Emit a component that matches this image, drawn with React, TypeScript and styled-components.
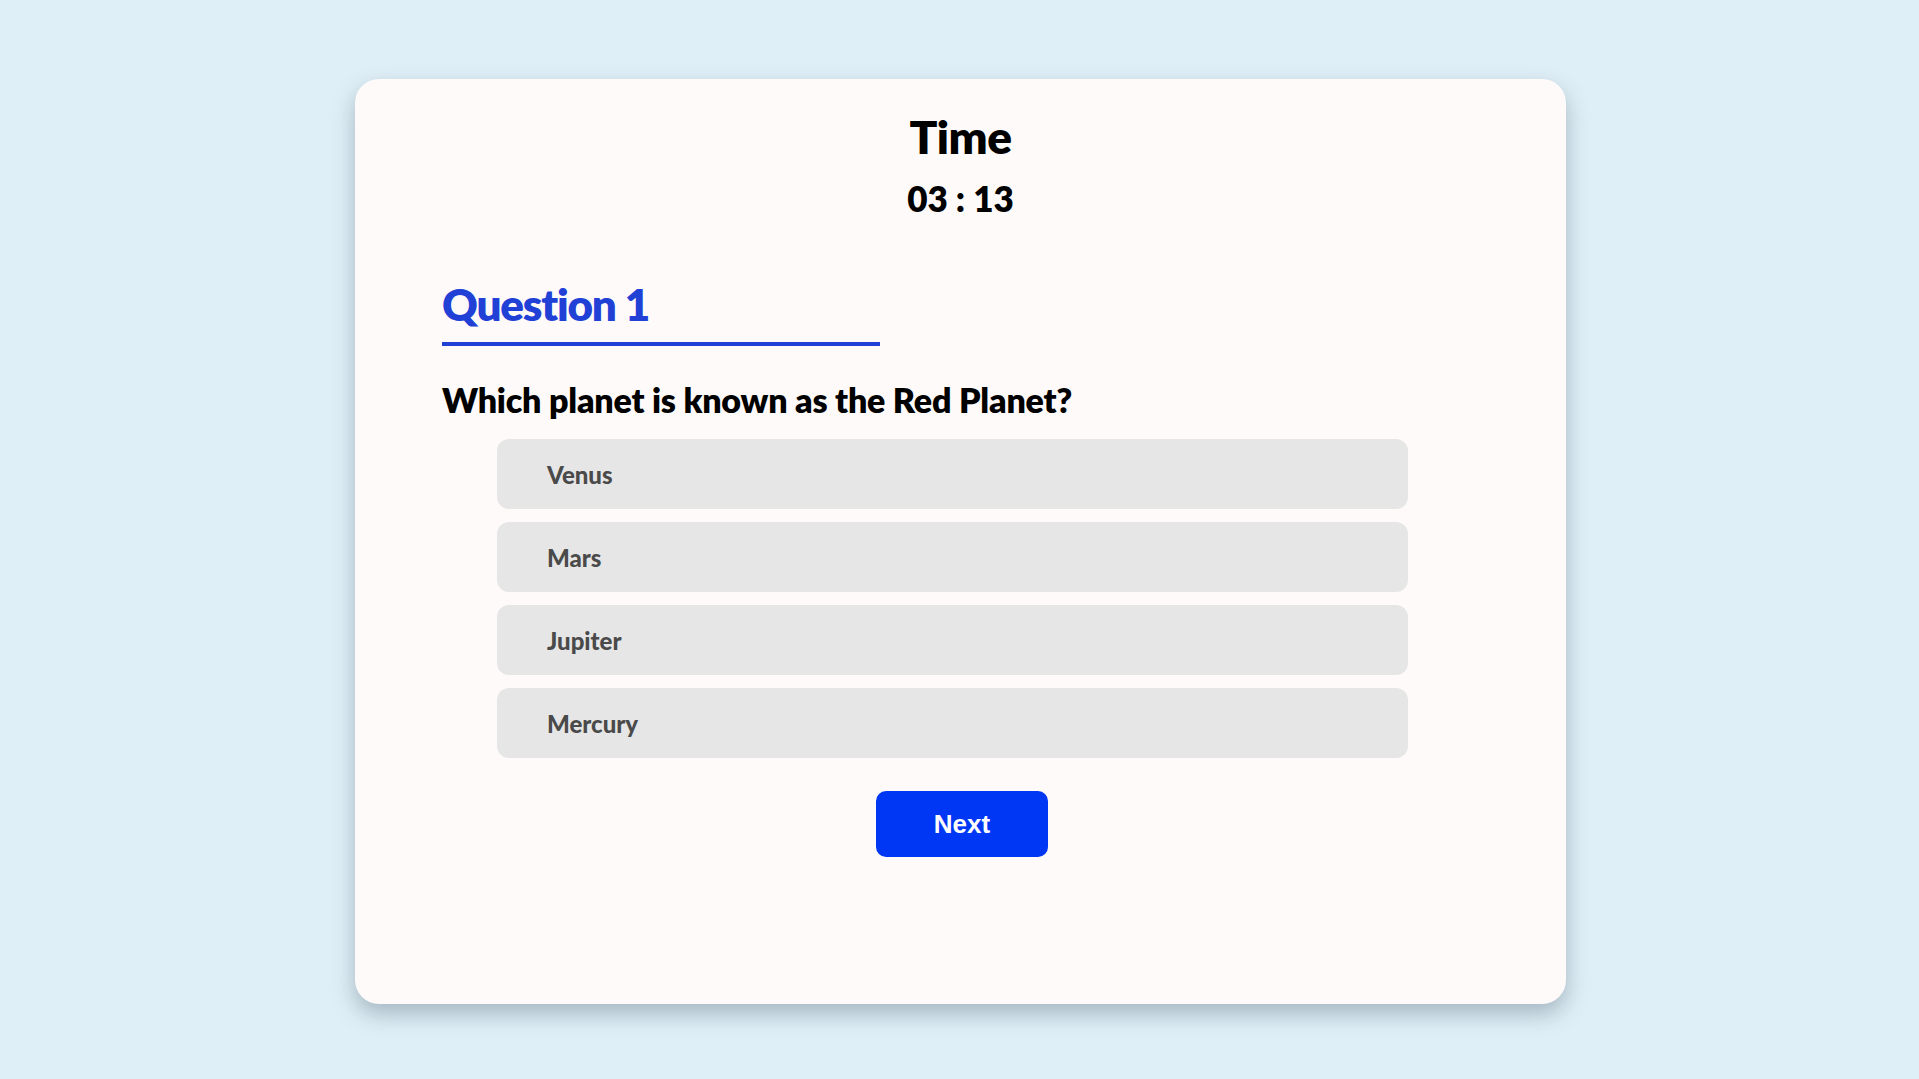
import React from "react";
import styled, { createGlobalStyle } from "styled-components";

const GlobalStyle = createGlobalStyle`
  html, body {
    margin: 0;
    padding: 0;
    background: #dfeff7;
  }
  * { box-sizing: border-box; }
`;

const Page = styled.div`
  min-height: 100vh;
  display: flex;
  justify-content: center;
  align-items: flex-start;
  padding-top: 79px;
  padding-left: 2px;
  font-family: Lato, "Noto Sans", sans-serif;
`;

const Card = styled.div`
  width: 1211px;
  background: #fefaf9;
  border-radius: 24px;
  box-shadow: 0 10px 22px rgba(60, 80, 95, 0.35);
  padding: 35px 87px 147px;
  display: flex;
  flex-direction: column;
`;

const TimerBlock = styled.div`
  display: flex;
  flex-direction: column;
  align-items: center;
  gap: 21px;
`;

const TimeLabel = styled.h2`
  margin: 0;
  font-size: 46px;
  line-height: 46px;
  font-weight: 800;
  letter-spacing: -0.5px;
  color: #000;
`;

const TimeValue = styled.div`
  font-size: 35px;
  line-height: 35px;
  font-weight: 800;
  color: #000;
`;

const QuestionHeading = styled.h3`
  margin: 66px 0 0;
  width: 438px;
  font-size: 44px;
  line-height: 44px;
  font-weight: 800;
  letter-spacing: -1.2px;
  color: #2141d6;
  padding-bottom: 16px;
  border-bottom: 4px solid #2141d6;
`;

const QuestionText = styled.p`
  margin: 37px 0 0;
  font-size: 34px;
  line-height: 34px;
  font-weight: 800;
  letter-spacing: -0.2px;
  color: #000;
`;

const OptionList = styled.ul`
  list-style: none;
  margin: 22px 0 0 55px;
  padding: 0;
  width: 911px;
  display: flex;
  flex-direction: column;
  gap: 13px;
`;

const Option = styled.li`
  height: 70px;
  display: flex;
  align-items: center;
  padding-left: 50px;
  background: #e6e6e6;
  border-radius: 12px;
  font-size: 24px;
  font-weight: 900;
  color: #4a4a4a;
  cursor: pointer;
`;

const Footer = styled.div`
  display: flex;
  justify-content: center;
  margin-top: 33px;
  padding-left: 3px;
`;

const NextButton = styled.button`
  width: 172px;
  height: 66px;
  border: none;
  border-radius: 10px;
  background: #0037f5;
  color: #fff;
  font-family: "Liberation Sans", Arial, sans-serif;
  font-weight: 700;
  font-size: 26px;
  cursor: pointer;
`;

const options = ["Venus", "Mars", "Jupiter", "Mercury"];

export default function App() {
  return (
    <>
      <GlobalStyle />
      <Page>
        <Card>
          <TimerBlock>
            <TimeLabel>Time</TimeLabel>
            <TimeValue>03 : 13</TimeValue>
          </TimerBlock>
          <QuestionHeading>Question 1</QuestionHeading>
          <QuestionText>Which planet is known as the Red Planet?</QuestionText>
          <OptionList>
            {options.map((o) => (
              <Option key={o}>{o}</Option>
            ))}
          </OptionList>
          <Footer>
            <NextButton>Next</NextButton>
          </Footer>
        </Card>
      </Page>
    </>
  );
}
